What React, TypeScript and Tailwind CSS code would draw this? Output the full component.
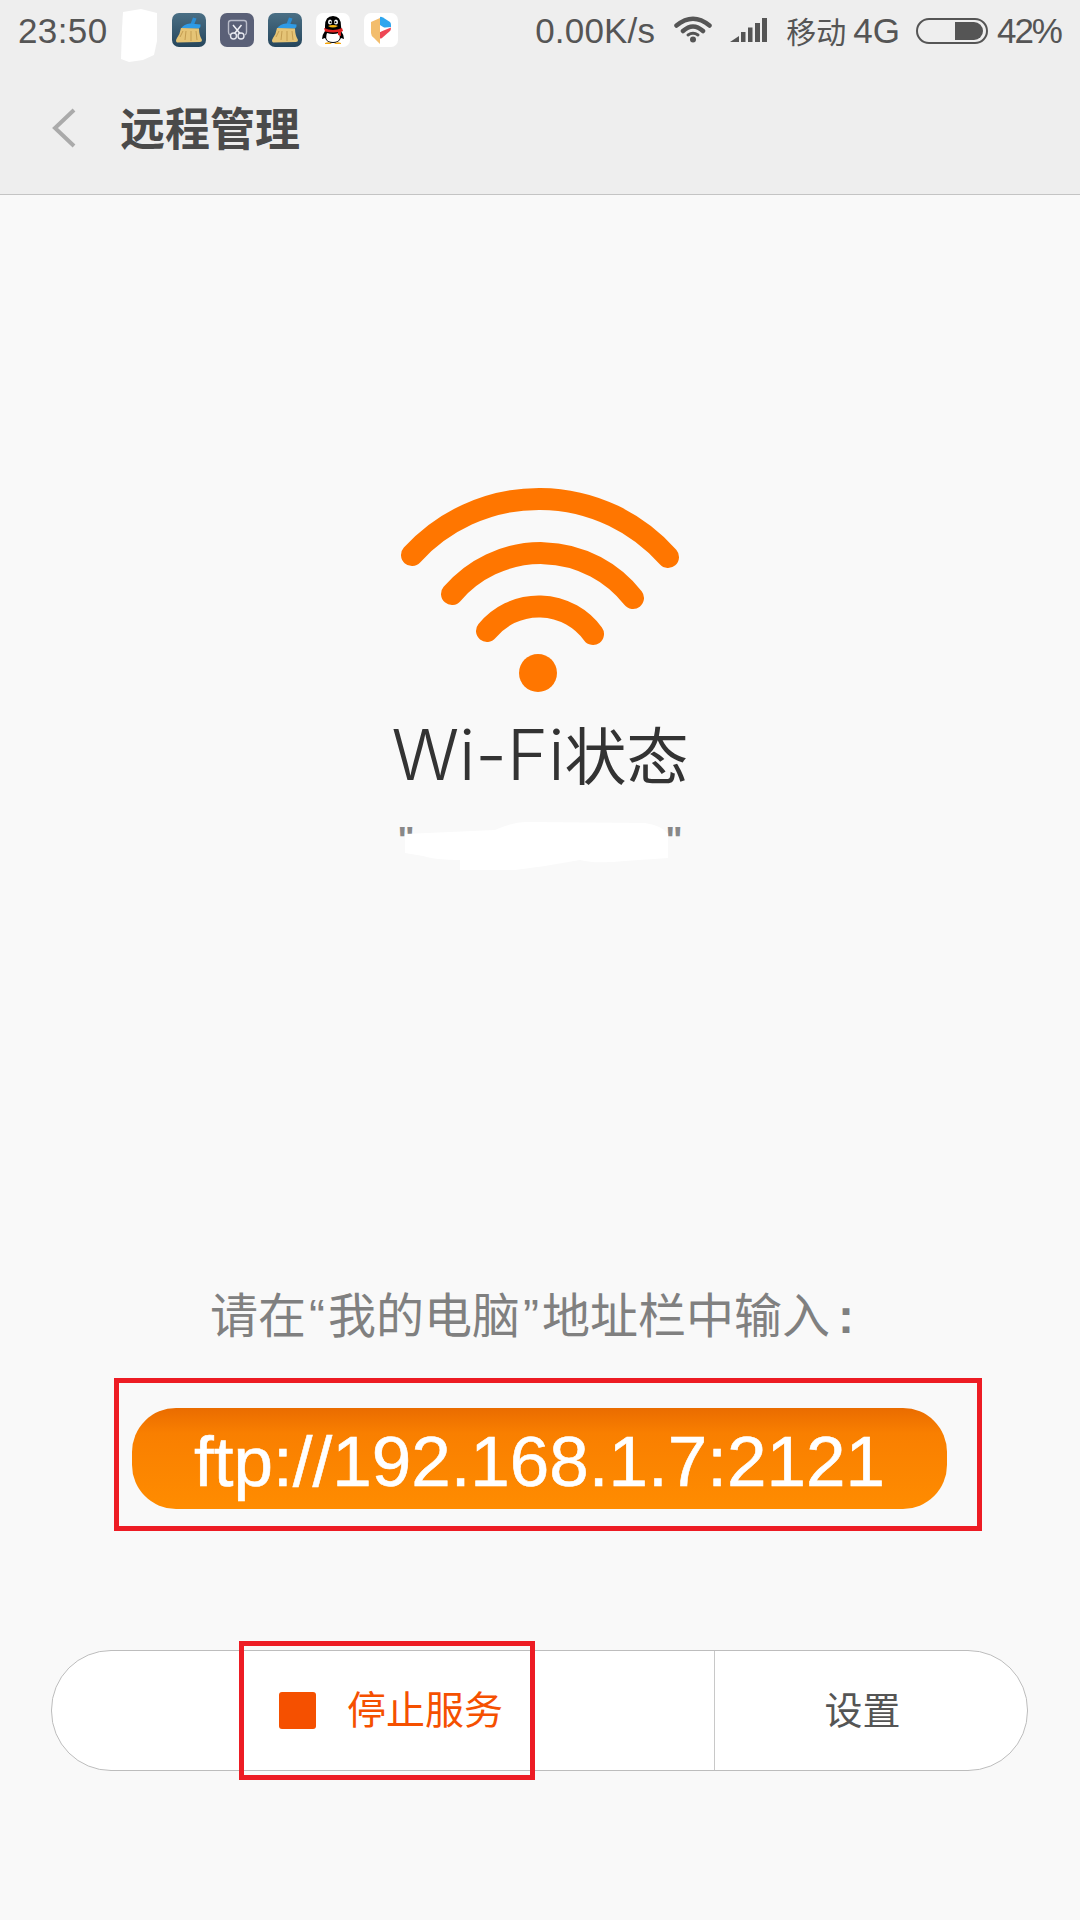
import React from "react";

const sans = "font-['Liberation_Sans','Noto_Sans_CJK_SC',sans-serif]";

function Broom() {
  return (
    <svg width="34" height="34" viewBox="0 0 34 34" className="shrink-0">
      <defs>
        <linearGradient id="bg1" x1="0" y1="0" x2="0" y2="1">
          <stop offset="0" stopColor="#4a6f85" />
          <stop offset="1" stopColor="#26465c" />
        </linearGradient>
      </defs>
      <rect width="34" height="34" rx="7" fill="url(#bg1)" />
      <path d="M21 4.500 L24.500 5.500 L22 12 L18.500 11 Z" fill="#2b8fd6" />
      <path d="M9 15.500 Q12 11 18 10.500 L28.500 11.500 Q29 14 27 15.500 Z" fill="#2f9be6" />
      <path d="M9 15 L27 15.500 Q27 22 30 27 Q30 29 28 29 L5 29.500 Q3 28 5 25 Q8 21 9 15 Z" fill="#e5c476" />
      <path d="M8 24 L11 18 M13 27 L14 18 M19 28 L19 18 M25 27 L24 18" stroke="#c49d50" strokeWidth="1" />
    </svg>
  );
}

function Scissors() {
  return (
    <svg width="34" height="34" viewBox="0 0 34 34" className="shrink-0">
      <rect width="34" height="34" rx="7" fill="#5a6077" />
      <path d="M10 22 Q8.500 21 8.500 19 V10 Q8.500 7.500 11 7.500 H24 Q26.500 7.500 26.500 10 V19 Q26.500 21 25 22" fill="none" stroke="#b9bcc9" strokeWidth="1.400" />
      <path d="M13 12 L20 20.500 M21.500 12 L14.500 20.500" fill="none" stroke="#f0f1f6" strokeWidth="1.500" />
      <circle cx="13.500" cy="23" r="3" fill="none" stroke="#e6e8ef" strokeWidth="1.400" />
      <circle cx="21" cy="23" r="3" fill="none" stroke="#e6e8ef" strokeWidth="1.400" />
    </svg>
  );
}

function Penguin() {
  return (
    <svg width="34" height="34" viewBox="0 0 34 34" className="shrink-0">
      <rect width="34" height="34" rx="7" fill="#ffffff" />
      <path d="M17 3 Q25 3 25 13 Q25 15 26 17 L9 17 Q9 15 9 13 Q9 3 17 3 Z" fill="#000000" />
      <path d="M9 18 Q6 22 6 26 L9 25 Q11 30 17 30 Q23 30 25 25 L28 26 Q28 22 25 18 Z" fill="#000000" />
      <path d="M11 20 Q17 22 23 20 Q25 25 22 28 Q17 30 12 28 Q9 25 11 20 Z" fill="#ffffff" />
      <path d="M8 15 Q17 19 26 15 L27 18 L25 19 L25 23 L22 22 L22 19 Q17 20 9 18.500 Z" fill="#e02020" />
      <ellipse cx="14" cy="9" rx="2" ry="2.600" fill="#ffffff" />
      <ellipse cx="20" cy="9" rx="2" ry="2.600" fill="#ffffff" />
      <circle cx="14.500" cy="9.300" r="1" fill="#000000" />
      <circle cx="19.500" cy="9.300" r="1" fill="#000000" />
      <path d="M12 13 Q17 11 22 13 Q17 16 12 13 Z" fill="#f5b50e" />
      <path d="M9 30 Q13 28 16 31 L9 31 Z M18 31 Q21 28 25 30 L25 31 Z" fill="#f5a70e" />
    </svg>
  );
}

function Player() {
  return (
    <svg width="34" height="34" viewBox="0 0 34 34" className="shrink-0">
      <rect width="34" height="34" rx="7" fill="#ffffff" />
      <path d="M7 9 L16 5 V31 L10 25 Q7 23 7 20 Z" fill="#f3bd6c" />
      <path d="M16 4 Q17 3.500 19 4.500 L26 9 Q27 10 27 12 V14 L16 15 Z" fill="#2ea6ee" />
      <path d="M16 19 L27 14.500 Q27 17 26 18 L18 25 Q16 26 16 25 Z" fill="#ee4755" />
      <path d="M16 12 L21.500 15.500 L16 19 Z" fill="#ffffff" />
    </svg>
  );
}

function StatusBar() {
  return (
    <div className="flex h-[62px] items-center text-[35px] leading-none text-[#555555]">
      <span className="ml-[18px] w-[91px] pb-[2px] tracking-[0.4px]">23:50</span>
      <svg width="36" height="53" viewBox="0 0 36 53" className="ml-[12px] mt-[9px] self-start shrink-0">
        <path d="M2 3 L20 0 L36 4 V32 L33 46 L22 51 L8 53 L0 50 L1 20 Z" fill="#ffffff" />
      </svg>
      <div className="ml-[15px] flex gap-[14px] self-start pt-[13px]">
        <Broom />
        <Scissors />
        <Broom />
        <Penguin />
        <Player />
      </div>
      <div className="ml-auto flex items-center pr-[19px]">
        <span className="pb-[2px] tracking-[0.2px]">0.00K/s</span>
        <svg width="38" height="28" viewBox="0 0 38 28" className="ml-[19px] mb-[4px]">
          <path d="M2.500 10.500 Q19 -3 35.500 10.500 M9 16 Q19 7 29 16" fill="none" stroke="#555555" strokeWidth="4.500" strokeLinecap="round" />
          <path d="M14 20 Q19 16.500 24 20" fill="none" stroke="#555555" strokeWidth="3" strokeLinecap="round" />
          <circle cx="19" cy="24.500" r="3" fill="#555555" />
        </svg>
        <svg width="37" height="24" viewBox="0 0 37 24" className="ml-[18px] mb-[2px]">
          <path d="M0 24 L9 18 V24 Z" fill="#555555" />
          <rect x="11" y="14" width="4.500" height="10" fill="#555555" />
          <rect x="18" y="9.500" width="4.500" height="14.500" fill="#555555" />
          <rect x="25" y="5" width="5" height="19" fill="#555555" />
          <rect x="32" y="0" width="5" height="24" fill="#555555" />
        </svg>
        <span className="ml-[19px] pb-[2px]"><span className="text-[30px]">移动</span><span className="ml-[7px]">4G</span></span>
        <div className="ml-[16px] flex h-[26px] w-[72px] items-center justify-end rounded-full border-[2px] border-[#555555] pr-[3px]">
          <div className="h-[18px] w-[28px] rounded-r-full bg-[#555555]" />
        </div>
        <span className="ml-[9px] pb-[2px] tracking-[-2px]">42%</span>
      </div>
    </div>
  );
}

function Header() {
  return (
    <div className="flex h-[133px] items-center border-b border-[#c4c4c4]">
      <svg width="24" height="40" viewBox="0 0 24 40" className="ml-[52px] mb-[1px]">
        <path d="M22 2 L3 20 L22 38" fill="none" stroke="#aaaaaa" strokeWidth="4" />
      </svg>
      <h1 className="ml-[44px] pt-[4px] text-[45px] font-bold leading-none text-[#4a4a4a]">远程管理</h1>
    </div>
  );
}

function BigWifi() {
  return (
    <svg width="304" height="215" viewBox="388 480 304 215" className="mx-auto mt-[285px] block">
      <g fill="none" stroke="#ff7600" strokeWidth="22" strokeLinecap="round">
        <path d="M412 555 A172 172 0 0 1 668 557" />
        <path d="M452 594 A117 117 0 0 1 633 598" />
        <path d="M487 631 A67 67 0 0 1 593 634" />
      </g>
      <circle cx="538" cy="673" r="19" fill="#ff7600" />
    </svg>
  );
}

export default function App() {
  return (
    <div className={`relative h-[1920px] w-[1080px] overflow-hidden bg-[#f9f9f9] ${sans}`}>
      <div className="bg-[#eeeeee]">
        <StatusBar />
        <Header />
      </div>
      <BigWifi />
      <h2 className="mt-[24px] text-center font-['Inter','Noto_Sans_CJK_SC',sans-serif] text-[70px] font-light leading-[72px] text-[#333333]">
        Wi-Fi<span className="text-[62px] font-normal">状态</span>
      </h2>
      <div className="relative mx-auto mt-[25px] flex h-[48px] w-[285px] justify-between text-[36px] leading-[44px] text-[#888888]">
        <span className="font-bold">"</span>
        <span className="font-bold">"</span>
        <svg width="264" height="50" viewBox="0 0 264 50" className="absolute left-[7px] top-[1px]">
          <path d="M0 14 L90 10 Q110 1 125 2 L240 3 Q258 6 263 14 V38 L220 41 Q190 44 175 40 L140 46 L110 50 L55 50 L55 40 Q30 40 18 36 L0 33 Z" fill="#ffffff" />
        </svg>
      </div>
      <p className="mt-[422px] pr-[16px] text-center text-[48px] leading-[56px] text-[#808080]">
        请在<span className="mx-[3px]">“</span>我的电脑<span className="mx-[3px]">”</span>地址栏中输入<span className="ml-[8px] font-bold">:</span>
      </p>
      <div className="ml-[114px] mt-[33px] h-[153px] w-[868px] border-[5px] border-[#ed1c24] pl-[13px] pr-[30px] pt-[25px]">
        <div className="flex h-[101px] items-center justify-center rounded-[44px] bg-gradient-to-b from-[#ea6c00] via-[#f97f00] via-25% to-[#ff8c00] pt-[5px] text-[71px] leading-none text-white [-webkit-text-stroke:0.6px_white]">
          ftp://192.168.1.7:2121
        </div>
      </div>
      <div className="relative ml-[51px] mt-[119px] flex h-[121px] w-[977px] rounded-[60px] border border-[#bdbdbd] bg-white">
        <div className="flex w-[662px] items-center pl-[227px] text-[39px] leading-none text-[#f55000]">
          <div className="h-[37px] w-[37px] rounded-[3px] bg-[#f55000]" />
          <span className="ml-[31px]">停止服务</span>
        </div>
        <div className="flex flex-1 items-center justify-center border-l border-[#c8c8c8] pr-[17px] text-[38px] leading-none text-[#555555]">设置</div>
        <div className="absolute left-[187px] top-[-10px] h-[139px] w-[296px] border-[5px] border-[#ed1c24]" />
      </div>
    </div>
  );
}
